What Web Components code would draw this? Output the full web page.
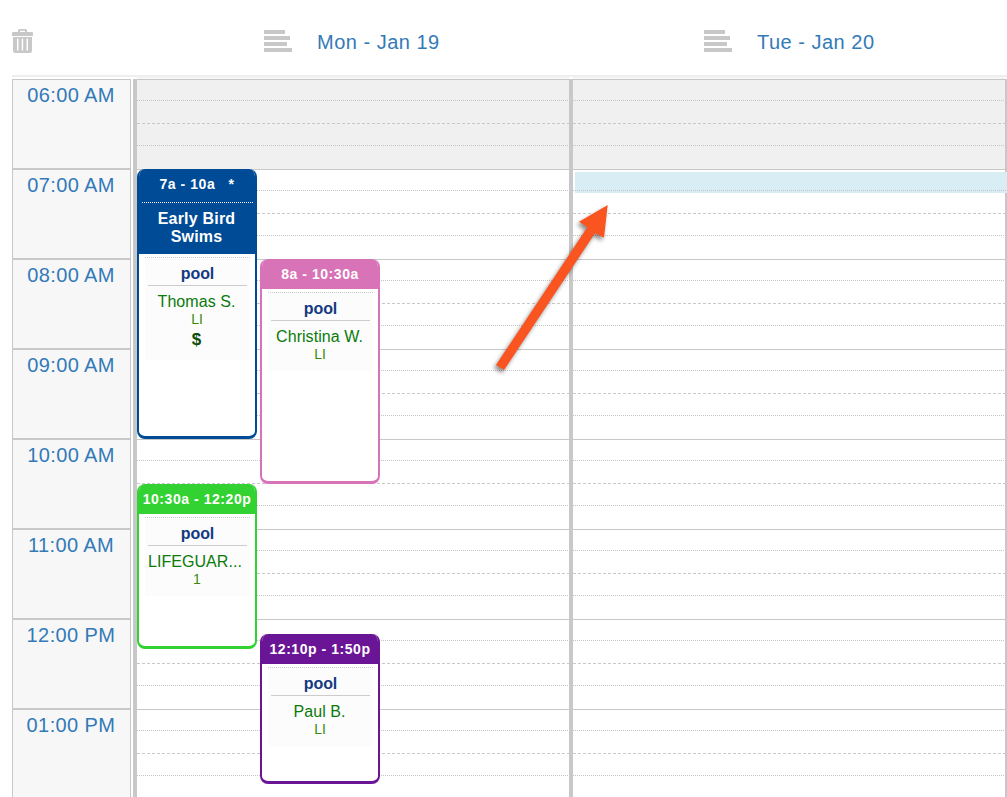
<!DOCTYPE html>
<html><head><meta charset="utf-8"><style>
html,body{margin:0;padding:0;background:#fff;overflow:hidden;height:797px;font-family:"Liberation Sans",Arial,sans-serif}
</style></head><body>
<cal-app>
  <cal-head slot="head">
    <svg slot="trash" width="21" height="24" viewBox="0 0 21 24"><path fill="#c8c8c8" fill-rule="evenodd" d="M6 3V1.500Q6 0 7.500 0h6Q15 0 15 1.500V3h5q1 0 1 1v3H0V4q0-1 1-1zM8 3h5V1.800H8zM1 8h19v13.500q0 2.500-2.500 2.500h-14Q1 24 1 21.500zM5 9.500v12h1.500v-12zM9.700 9.500v12h1.500v-12zM14.500 9.500v12H16v-12z"/></svg>
    <cal-dayhead>Mon - Jan 19</cal-dayhead>
    <cal-dayhead>Tue - Jan 20</cal-dayhead>
  </cal-head>
  <cal-body>
    <cal-times>
      <cal-time>06:00 AM</cal-time><cal-time>07:00 AM</cal-time><cal-time>08:00 AM</cal-time><cal-time>09:00 AM</cal-time><cal-time>10:00 AM</cal-time><cal-time>11:00 AM</cal-time><cal-time>12:00 PM</cal-time><cal-time>01:00 PM</cal-time>
    </cal-times>
    <cal-day first>
      <cal-event style="left:0;top:90px;width:120px;height:270px;--c:#004b96" time="7a - 10a&#160;&#160;&#160;*" title-text="Early Bird Swims" name="Thomas S." sub="LI" money></cal-event>
      <cal-event style="left:123px;top:180px;width:120px;height:225px;--c:#d873b8" time="8a - 10:30a" name="Christina W." sub="LI"></cal-event>
      <cal-event style="left:0;top:405px;width:120px;height:165px;--c:#32d232" time="10:30a - 12:20p" name="LIFEGUAR..." sub="1" trunc></cal-event>
      <cal-event style="left:123px;top:555px;width:120px;height:150px;--c:#6a1596" time="12:10p - 1:50p" name="Paul B." sub="LI"></cal-event>
    </cal-day>
    <cal-day last><div style="position:absolute;left:2px;top:93px;right:-2px;height:21px;background:repeating-linear-gradient(90deg,#c4c4c4 0 1px,transparent 1px 2px) no-repeat 0 18px/100% 1px,#d9edf4"></div></cal-day>
  </cal-body>
  <svg slot="arrow" width="140" height="190" viewBox="490 195 140 190" style="filter:drop-shadow(-2px 3px 2px rgba(0,0,0,.45))"><polygon fill="#fa5420" points="607.700,205 604,237.700 595,233.300 504,370 496,365 587.300,227.300 579,221.700"/></svg>
</cal-app>
<script>
function def(name, css, html){
  customElements.define(name, class extends HTMLElement{
    connectedCallback(){
      if(this.shadowRoot) return;
      const r=this.attachShadow({mode:'open'});
      r.innerHTML='<style>'+css+'</style>'+(typeof html==='function'?html(this):html);
    }
  });
}
const BLUE='#337ab7';
def('cal-app',`:host{display:block;position:relative;width:1007px;height:797px;overflow:hidden;padding-left:12px;box-sizing:border-box}
 ::slotted(svg){position:absolute;left:490px;top:195px;z-index:5}`,
 `<slot name="head"></slot><slot></slot><slot name="arrow"></slot>`);
def('cal-head',`:host{display:flex;height:75px;border-bottom:2px solid #eee;align-items:flex-start;color:${BLUE}}
 ::slotted(svg){flex:none;margin-top:29px;margin-right:231px}`,
 `<slot name="trash"></slot><slot></slot>`);
def('cal-dayhead',`:host{display:flex;align-items:center;width:440px;flex:none;font-size:20px;letter-spacing:.5px;margin-top:30px;height:24px;color:${BLUE}}
 svg{margin-right:25px;flex:none;margin-top:-2px}`,
 `<svg width="28" height="22" viewBox="0 0 28 22"><path fill="#c8c8c8" d="M0 0h21v4H0zM0 6h26v4H0zM0 12h23v4H0zM0 18h28v4H0z"/></svg><span><slot></slot></span>`);
def('cal-body',`:host{display:flex;height:720px;margin-top:2px}`,`<slot></slot>`);
def('cal-times',`:host{display:flex;flex-direction:column;width:119px;flex:none;margin-right:2px}`,`<slot></slot>`);
def('cal-time',`:host{display:block;height:90px;flex:none;box-sizing:border-box;border:1px solid #c8c8c8;background:#f7f7f7;color:${BLUE};font-size:20px;letter-spacing:.4px;text-align:center;line-height:26px;padding:2px 1px 0 0}`,`<slot></slot>`);
def('cal-day',`:host{display:block;position:relative;box-sizing:border-box;flex:none;height:720px;border-left:4px solid #c8c8c8;
   background:linear-gradient(#f0f0f0,#f0f0f0) no-repeat 0 0/100% 90px #fff}
 :host::before{content:"";position:absolute;left:0;right:0;top:-2px;height:2px;background:#f5f5f5}
 :host([first]){width:436px}
 :host([last]){width:438px;border-right:2px solid #c8c8c8}
 .grid{position:absolute;inset:0;display:flex;flex-direction:column}
 .h{height:90px;flex:none;box-sizing:border-box;border-top:1px solid #c8c8c8;display:grid;grid-template-rows:20px 23px 22px 24px}
 .h i{display:block;height:1px}
 .d{background:repeating-linear-gradient(90deg,#c4c4c4 0 1px,transparent 1px 2px)}
 .a{background:repeating-linear-gradient(90deg,#c8c8c8 0 3px,transparent 3px 5px)}`,
 ()=>`<div class="grid">${'<div class="h"><span></span><i class="d"></i><i class="a"></i><i class="d"></i></div>'.repeat(8)}</div><slot></slot>`);
def('cal-event',`:host{display:block;position:absolute;box-sizing:border-box;background:#fff;border:solid var(--c);border-width:0 2px 3px 2px;border-radius:8px;overflow:hidden;text-align:center;z-index:2}
 .hd{background:var(--c);color:#fff;font-weight:bold;margin:0 -2px}
 .t{height:30px;line-height:30px;font-size:14px;white-space:pre;letter-spacing:.55px}
 .n{margin:3px 4px 0 5px;border-top:1px dotted #fff;font-size:16px;line-height:18px;padding:7px 2px 8px 0;letter-spacing:.2px}
 .b{margin:3px 5px 0 6px;border-top:1px dotted #ccc;background:#fcfcfc;padding-bottom:9px}
 .p{font-weight:bold;color:#123a82;font-size:16px;line-height:20px;padding:6px 0 1px;margin:0 3px;border-bottom:1px solid #ccc;letter-spacing:-.1px}
 .nm{color:#0a7a0a;font-size:16px;line-height:18px;margin-top:7px;letter-spacing:.05px;white-space:nowrap;padding-right:2px}
 :host([trunc]) .nm{text-align:left;padding:0 0 0 3px}
 .sb{color:#3a8a0a;font-size:14px;line-height:16px;padding-right:1px}
 .m{color:#0b4d0b;font-weight:bold;font-size:17px;line-height:22px;margin-top:2px;padding-right:2px}`,
 (e)=>`<div class="hd"><div class="t">${e.getAttribute('time')}</div>${e.hasAttribute('title-text')?`<div class="n">Early Bird<br>Swims</div>`:''}</div>
 <div class="b"><div class="p">pool</div><div class="nm">${e.getAttribute('name')}</div><div class="sb">${e.getAttribute('sub')}</div>${e.hasAttribute('money')?'<div class="m">$</div>':''}</div>`);
</script>
</body></html>
